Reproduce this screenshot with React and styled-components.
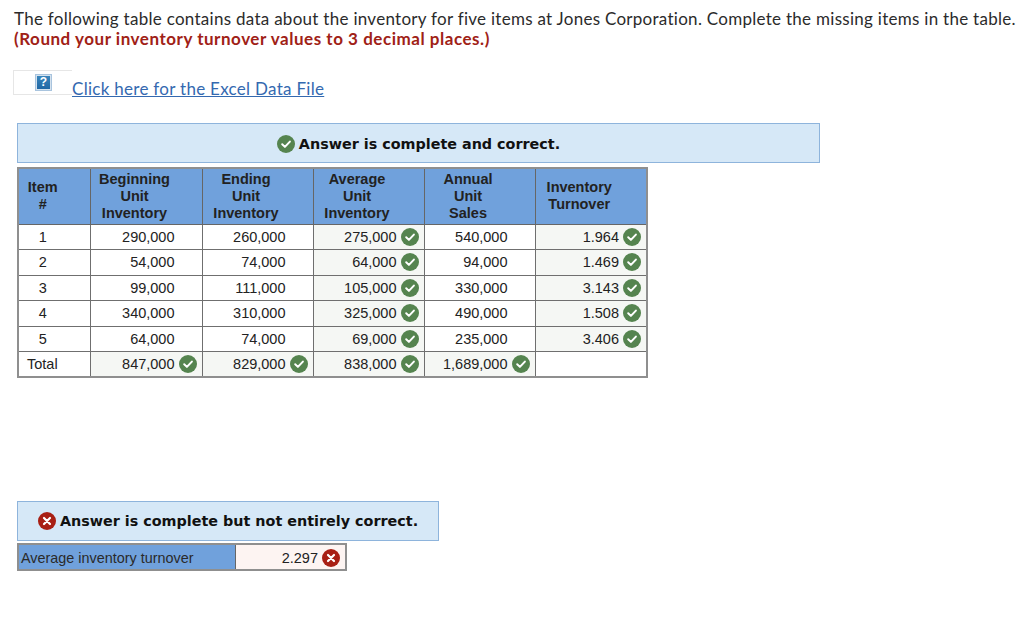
import styled, { createGlobalStyle } from "styled-components";

const GlobalStyle = createGlobalStyle`
  html, body {
    margin: 0;
    background: #fff;
  }
`;

const Page = styled.div`
  width: 1024px;
  height: 644px;
  overflow: hidden;
  padding: 9px 0 0 14px;
  box-sizing: border-box;
  font-family: "Lato", "Liberation Sans", sans-serif;
  color: #2b2b2b;
`;

const Intro = styled.p`
  margin: 0;
  font-size: 17px;
  line-height: 20px;
  letter-spacing: 0.28px;
  white-space: nowrap;
`;

const Hint = styled.strong`
  display: block;
  color: #a02116;
  font-weight: 700;
  letter-spacing: 0.53px;
`;

const LinkRow = styled.div`
  display: flex;
  align-items: flex-end;
  margin: 21px 0 0 -1px;
`;

const HelpBox = styled.div`
  width: 59px;
  height: 25px;
  box-sizing: border-box;
  border: 1px solid #e6e6e6;
  border-right: none;
  display: flex;
  align-items: center;
  justify-content: center;
  padding-left: 1px;
`;

const HelpIcon = styled.div`
  width: 17px;
  height: 17px;
  box-sizing: border-box;
  border: 1px solid #a9c4de;
  outline: 1px solid #d5e2ee;
  outline-offset: -2px;
  background: linear-gradient(#3a86bd, #1f66a3);
  color: #fff;
  font: 700 12px/15px "Liberation Sans", sans-serif;
  text-align: center;
`;

const ExcelLink = styled.a`
  font-size: 17px;
  line-height: 20px;
  letter-spacing: 0.29px;
  margin-bottom: -4px;
  color: #3469b0;
  text-decoration: underline;
`;

const Section = styled.div`
  margin: ${(p) => p.$top}px 0 0 3px;
`;

const Banner = styled.div`
  width: ${(p) => p.$width}px;
  height: 40px;
  box-sizing: border-box;
  display: flex;
  align-items: center;
  justify-content: center;
  gap: 4px;
  padding-top: ${(p) => (p.$lower ? 1 : 0)}px;
  background: #d6e8f7;
  border: 1px solid #8eb4dc;
  font: 700 14.35px "DejaVu Sans", "Liberation Sans", sans-serif;
  color: #111;
`;

const Table = styled.table`
  border-collapse: collapse;
  table-layout: fixed;
  width: ${(p) => p.$width}px;
  margin-top: ${(p) => p.$top}px;
  font: 14.5px "Liberation Sans", Arial, sans-serif;
  color: #222;
  border: 2px solid #8f8f8f;
`;

const Head = styled.th`
  height: 56px;
  padding: 0 23px 0 0;
  box-sizing: border-box;
  background: #70a1dc;
  border: 1px solid #666;
  font-weight: 700;
  font-size: 14.5px;
  line-height: 16.8px;
  color: #222;
  text-align: center;
  vertical-align: middle;
`;

const Cell = styled.td`
  height: 25.5px;
  padding: 0;
  box-sizing: border-box;
  border: 1px solid #6f6f6f;
  background: ${(p) => (p.$answer ? "#f5f7f4" : "#fff")};
`;

const CellInner = styled.div`
  display: flex;
  align-items: center;
  justify-content: flex-end;
  gap: 4px;
  padding-right: ${(p) => (p.$icon ? 5 : 27)}px;
`;

const ItemCell = styled.div`
  text-align: ${(p) => (p.$left ? "left" : "center")};
  padding: ${(p) => (p.$left ? "0 0 0 8px" : "0 23px 0 0")};
`;

const LabelCell = styled.td`
  height: 26px;
  padding: 1px 0 0 2px;
  box-sizing: border-box;
  background: #70a1dc;
  border: 1px solid #666;
  color: #2a2a2a;
  font-size: 14.4px;
`;

const ValueCell = styled.td`
  padding: 1px 0 0;
  background: #fdf4f2;
  border: 1px solid #6f6f6f;
`;

const Badge = styled.svg`
  width: 18px;
  height: 18px;
  flex: none;
`;

function CheckIcon() {
  return (
    <Badge viewBox="0 0 18 18">
      <circle cx="9" cy="9" r="9" fill="#55844f" />
      <path d="M5.2 9.3 7.9 11.9 12.9 6.6" fill="none" stroke="#fff" strokeWidth="2" strokeLinecap="round" strokeLinejoin="round" />
    </Badge>
  );
}

function CrossIcon() {
  return (
    <Badge viewBox="0 0 18 18">
      <circle cx="9" cy="9" r="9" fill="#a81f14" />
      <path d="M6 6 12 12M12 6 6 12" fill="none" stroke="#fff" strokeWidth="2.2" strokeLinecap="round" />
    </Badge>
  );
}

const rows = [
  ["1", "290,000", "260,000", "275,000", "540,000", "1.964"],
  ["2", "54,000", "74,000", "64,000", "94,000", "1.469"],
  ["3", "99,000", "111,000", "105,000", "330,000", "3.143"],
  ["4", "340,000", "310,000", "325,000", "490,000", "1.508"],
  ["5", "64,000", "74,000", "69,000", "235,000", "3.406"],
];

const totals = ["Total", "847,000", "829,000", "838,000", "1,689,000", ""];

const widths = [72, 112, 111, 111, 111, 112];

const headers = [
  ["Item", "#"],
  ["Beginning", "Unit", "Inventory"],
  ["Ending", "Unit", "Inventory"],
  ["Average", "Unit", "Inventory"],
  ["Annual", "Unit", "Sales"],
  ["Inventory", "Turnover"],
];

function ValueTd({ value, answer }) {
  return (
    <Cell $answer={answer}>
      <CellInner $icon={answer}>
        {value}
        {answer && <CheckIcon />}
      </CellInner>
    </Cell>
  );
}

export default function App() {
  return (
    <Page>
      <GlobalStyle />
      <Intro>
        The following table contains data about the inventory for five items at Jones Corporation. Complete the missing items in the table.
        <Hint>(Round your inventory turnover values to 3 decimal places.)</Hint>
      </Intro>

      <LinkRow>
        <HelpBox>
          <HelpIcon>?</HelpIcon>
        </HelpBox>
        <ExcelLink href="#">Click here for the Excel Data File</ExcelLink>
      </LinkRow>

      <Section $top={28}>
        <Banner $width={803} $lower>
          <CheckIcon />
          Answer is complete and correct.
        </Banner>
        <Table $width={629} $top={4}>
          <colgroup>
            {widths.map((w, i) => (
              <col key={i} style={{ width: w }} />
            ))}
          </colgroup>
          <thead>
            <tr>
              {headers.map((lines, i) => (
                <Head key={i}>
                  {lines.map((l, j) => (
                    <div key={j}>{l}</div>
                  ))}
                </Head>
              ))}
            </tr>
          </thead>
          <tbody>
            {rows.map((r) => (
              <tr key={r[0]}>
                <Cell>
                  <ItemCell>{r[0]}</ItemCell>
                </Cell>
                <ValueTd value={r[1]} />
                <ValueTd value={r[2]} />
                <ValueTd value={r[3]} answer />
                <ValueTd value={r[4]} />
                <ValueTd value={r[5]} answer />
              </tr>
            ))}
            <tr>
              <Cell>
                <ItemCell $left>{totals[0]}</ItemCell>
              </Cell>
              <ValueTd value={totals[1]} answer />
              <ValueTd value={totals[2]} answer />
              <ValueTd value={totals[3]} answer />
              <ValueTd value={totals[4]} answer />
              <Cell />
            </tr>
          </tbody>
        </Table>
      </Section>

      <Section $top={123}>
        <Banner $width={422}>
          <CrossIcon />
          Answer is complete but not entirely correct.
        </Banner>
        <Table $width={328} $top={2}>
          <colgroup>
            <col style={{ width: 217 }} />
            <col style={{ width: 111 }} />
          </colgroup>
          <tbody>
            <tr>
              <LabelCell>Average inventory turnover</LabelCell>
              <ValueCell>
                <CellInner $icon>
                  2.297
                  <CrossIcon />
                </CellInner>
              </ValueCell>
            </tr>
          </tbody>
        </Table>
      </Section>
    </Page>
  );
}
